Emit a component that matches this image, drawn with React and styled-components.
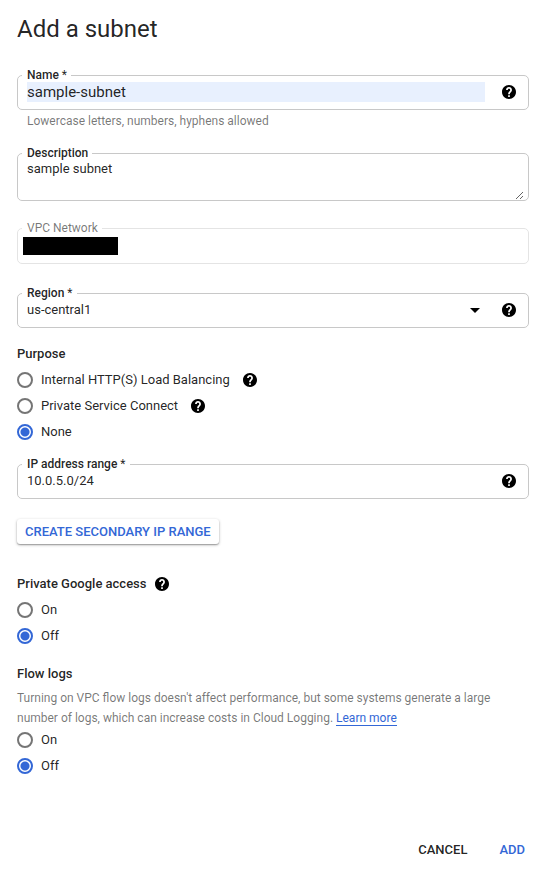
import { useState } from "react"
import styled, { createGlobalStyle } from "styled-components"

const GlobalStyle = createGlobalStyle`
  * {
    box-sizing: border-box;
  }

  body {
    margin: 0;
    background-color: white;
    color: rgba(0,0,0,0.87);
    font-family: Roboto, sans-serif;
    font-size: 13px;
    line-height: 20px;
  }

  input, select, textarea, button {
    margin: 0;
    font: inherit;
    color: inherit;
  }
`

const Form = styled.form`
  display: flex;
  flex-direction: column;
  padding: 13px 18px 7px 17px;
`

const Title = styled.h1`
  margin: 0 0 23px;
  font-size: 24px;
  font-weight: 400;
  line-height: 32px;
`

const Outline = styled.fieldset`
  min-width: 0;
  margin: 0 0 ${props => props.$gap || 0}px;
  padding: 0 4px;
  border: 1px solid ${props => (props.$disabled ? "#e4e4e4" : "#c8c8c8")};
  border-radius: 5px;
`

const Legend = styled.legend`
  padding: 0 4px 0 5px;
  font-size: 12px;
  font-weight: ${props => (props.$disabled ? 400 : 500)};
  line-height: 14px;
  color: ${props => (props.$disabled ? "rgba(0,0,0,0.54)" : "inherit")};
`

const Required = styled.span`
  font-weight: 400;
`

const Control = styled.div`
  display: flex;
  align-items: center;
  height: 27px;
  padding: 0 8px 7px 5px;
`

const Input = styled.input`
  flex: 1;
  min-width: 0;
  height: 20px;
  margin-right: 17px;
  padding: 0;
  border: none;
  outline: none;
  font-size: ${props => (props.$filled ? 15 : 13)}px;
  background-color: ${props => (props.$filled ? "#e8f0fe" : "transparent")};
`

const TextArea = styled.textarea`
  display: block;
  width: 100%;
  height: 40px;
  padding: 0 5px;
  border: none;
  outline: none;
  line-height: 17px;
  background-color: transparent;
  resize: vertical;
`

const HiddenValue = styled.input`
  display: block;
  width: 95px;
  height: 18px;
  margin: 2px 0 8px 1px;
  padding: 0;
  border: none;
  background-color: black;
`

const Select = styled.select`
  flex: 1;
  min-width: 0;
  height: 20px;
  padding: 0;
  border: none;
  outline: none;
  appearance: none;
  background-color: transparent;
`

const Arrow = styled.svg`
  flex: none;
  width: 10px;
  height: 5px;
  margin-right: 22px;
`

const Hint = styled.p`
  margin: 1px 10px 15px;
  font-size: 12px;
  color: rgba(0,0,0,0.54);
`

const HelpButton = styled.button`
  flex: none;
  display: flex;
  width: 14px;
  height: 14px;
  padding: 0;
  border: none;
  background: none;
  color: black;
  cursor: pointer;
`

const Group = styled.div`
  display: flex;
  flex-direction: column;
  margin-bottom: ${props => props.$gap || 0}px;
`

const Heading = styled.h2`
  display: flex;
  align-items: center;
  gap: 8px;
  margin: 0 0 3px;
  font-size: 13px;
  font-weight: 500;
`

const RadioRow = styled.div`
  display: flex;
  align-items: center;
  gap: 13px;
  height: 26px;
`

const RadioLabel = styled.label`
  display: flex;
  align-items: center;
  gap: 8px;
  cursor: pointer;
`

const Radio = styled.input`
  appearance: none;
  width: 16px;
  height: 16px;
  border: 2px solid #757575;
  border-radius: 50%;
  cursor: pointer;

  &:checked {
    border-color: #3367d6;
    background: radial-gradient(circle, #3367d6 4px, transparent 5px);
  }
`

const Text = styled.p`
  margin: 1px 0 -1px;
  font-size: 12px;
  color: rgba(0,0,0,0.54);
`

const Link = styled.a`
  color: #3367d6;
  text-decoration: none;
  border-bottom: 1px solid #3367d6;
`

const RangeButton = styled.button`
  align-self: flex-start;
  height: 25px;
  margin-bottom: 30px;
  padding: 0 8px;
  border: none;
  border-radius: 3px;
  background-color: white;
  color: #3367d6;
  font-weight: 500;
  line-height: 24px;
  box-shadow: 0 1px 3px rgba(0,0,0,0.3), 0 1px 1px rgba(0,0,0,0.2);
  cursor: pointer;
`

const Footer = styled.div`
  display: flex;
  justify-content: flex-end;
  gap: 24px;
  margin-top: 58px;
`

const TextButton = styled.button`
  height: 26px;
  padding: 0 4px;
  border: none;
  background: none;
  color: ${props => (props.$primary ? "#3367d6" : "inherit")};
  font-weight: 500;
  cursor: pointer;
`

const Help = ({ topic }) => {
  return (
    <HelpButton type="button" aria-label={`Help for ${topic}`}>
      <svg width="14" height="14" viewBox="2 2 20 20" fill="currentColor">
        <path d="M12 2C6.48 2 2 6.48 2 12s4.48 10 10 10 10-4.48 10-10S17.52 2 12 2zm1.2 17.2h-2.4v-2.4h2.4v2.4zm2.07-7.45l-.9.92C13.65 13.4 13.2 14 13.2 15.2h-2.4v-.7c0-1.1.45-2.1 1.17-2.83l1.24-1.26c.3-.36.49-.86.49-1.41 0-1-.7-1.7-1.7-1.7s-1.7.7-1.7 1.7H7.8c0-2.31 1.89-4.2 4.2-4.2s4.2 1.89 4.2 4.2c0 .98-.36 2.08-.93 2.75z" />
      </svg>
    </HelpButton>
  )
}

const Field = ({ id, label, gap, disabled, required, children }) => {
  return (
    <Outline $gap={gap} $disabled={disabled}>
      <Legend $disabled={disabled}>
        <label htmlFor={id}>
          {label}
          {required && <Required> *</Required>}
        </label>
      </Legend>
      {children}
    </Outline>
  )
}

const RadioGroup = ({ name, label, options, initial }) => {
  const [value, setValue] = useState(initial)
  return (
    <div role="radiogroup" aria-label={label}>
      {options.map(option => (
        <RadioRow key={option.text}>
          <RadioLabel>
            <Radio
              type="radio"
              name={name}
              checked={value === option.text}
              onChange={() => setValue(option.text)}
            />
            {option.text}
          </RadioLabel>
          {option.help && <Help topic={option.text} />}
        </RadioRow>
      ))}
    </div>
  )
}

const purposes = [
  { text: "Internal HTTP(S) Load Balancing", help: true },
  { text: "Private Service Connect", help: true },
  { text: "None" },
]

const onOff = [{ text: "On" }, { text: "Off" }]

const App = () => {
  return (
    <>
      <GlobalStyle />
      <Form onSubmit={e => e.preventDefault()}>
        <Title>Add a subnet</Title>

        <Field id="name" label="Name" required>
          <Control>
            <Input id="name" defaultValue="sample-subnet" $filled />
            <Help topic="Name" />
          </Control>
        </Field>
        <Hint>Lowercase letters, numbers, hyphens allowed</Hint>

        <Field id="description" label="Description" gap={20}>
          <TextArea id="description" defaultValue="sample subnet" />
        </Field>

        <Field id="network" label="VPC Network" gap={22} disabled>
          <HiddenValue id="network" disabled />
        </Field>

        <Field id="region" label="Region" gap={16} required>
          <Control>
            <Select id="region" defaultValue="us-central1">
              <option>us-central1</option>
              <option>us-east1</option>
              <option>us-west1</option>
            </Select>
            <Arrow viewBox="0 0 10 5">
              <path d="M0 0h10L5 5z" />
            </Arrow>
            <Help topic="Region" />
          </Control>
        </Field>

        <Group $gap={12}>
          <Heading>Purpose</Heading>
          <RadioGroup name="purpose" label="Purpose" options={purposes} initial="None" />
        </Group>

        <Field id="range" label="IP address range" gap={20} required>
          <Control>
            <Input id="range" defaultValue="10.0.5.0/24" />
            <Help topic="IP address range" />
          </Control>
        </Field>

        <RangeButton type="button">CREATE SECONDARY IP RANGE</RangeButton>

        <Group $gap={15}>
          <Heading>
            Private Google access
            <Help topic="Private Google access" />
          </Heading>
          <RadioGroup name="access" label="Private Google access" options={onOff} initial="Off" />
        </Group>

        <Group>
          <Heading>Flow logs</Heading>
          <Text>
            Turning on VPC flow logs doesn't affect performance, but some systems generate a large
            number of logs, which can increase costs in Cloud Logging. <Link href="#">Learn more</Link>
          </Text>
          <RadioGroup name="logs" label="Flow logs" options={onOff} initial="Off" />
        </Group>

        <Footer>
          <TextButton type="button">CANCEL</TextButton>
          <TextButton type="submit" $primary>ADD</TextButton>
        </Footer>
      </Form>
    </>
  )
}

export default App
